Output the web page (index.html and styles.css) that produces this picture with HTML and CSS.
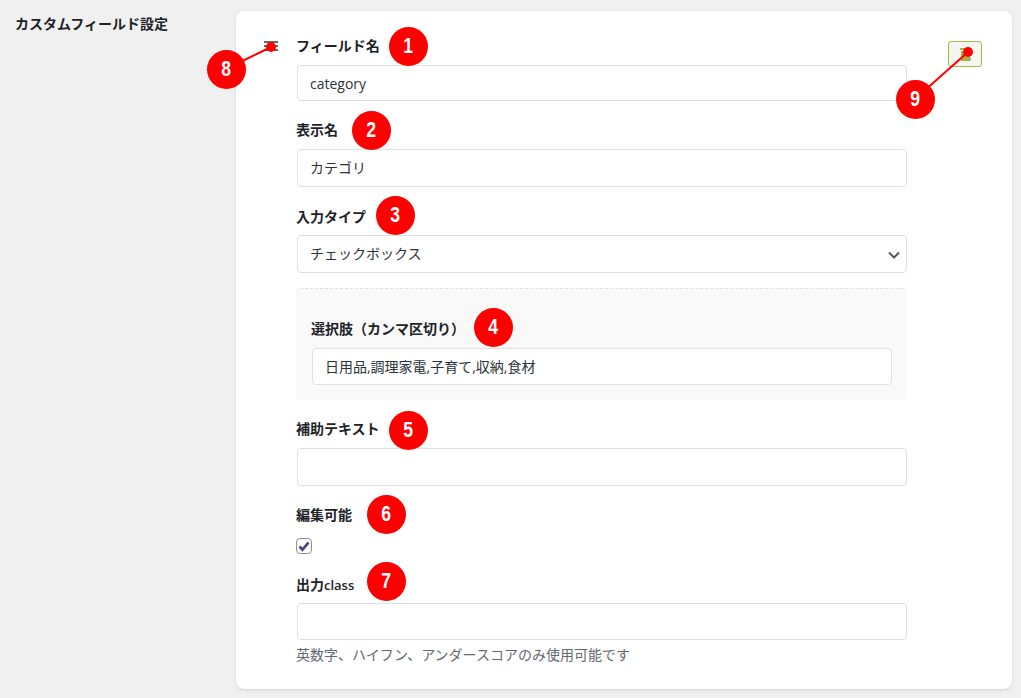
FILE: index.html
```html
<!DOCTYPE html>
<html lang="ja">
<head>
<meta charset="utf-8">
<title>カスタムフィールド設定</title>
<link rel="stylesheet" href="styles.css">
</head>
<body>
<main class="page">
  <h2 class="page-title">カスタムフィールド設定</h2>
  <section class="card">
    <div class="handle" aria-hidden="true"><span></span><span></span><span></span></div>
    <div class="fields">
      <div class="field field-name">
        <label class="label">フィールド名</label>
        <input class="input input-short" type="text" value="category">
      </div>
      <div class="field field-display">
        <label class="label">表示名</label>
        <input class="input" type="text" value="カテゴリ">
      </div>
      <div class="field field-type">
        <label class="label">入力タイプ</label>
        <div class="select-wrap">
          <select class="input select"><option>チェックボックス</option></select>
          <svg class="chevron" width="12" height="8" viewBox="0 0 12 8"><path d="M1 1.5l5 5 5-5" fill="none" stroke="#50575e" stroke-width="2"/></svg>
        </div>
      </div>
      <div class="options-panel">
        <label class="label">選択肢（カンマ区切り）</label>
        <input class="input input-short" type="text" value="日用品,調理家電,子育て,収納,食材">
      </div>
      <div class="field field-help">
        <label class="label">補助テキスト</label>
        <input class="input" type="text">
      </div>
      <div class="field field-edit">
        <label class="label">編集可能</label>
        <span class="checkbox"><svg width="12" height="11" viewBox="0 0 12 11"><path d="M1.5 5.5l3 3.2L10.5 1.5" fill="none" stroke="#4f3f73" stroke-width="2.6"/></svg></span>
      </div>
      <div class="field field-class">
        <label class="label">出力<span class="latin">class</span></label>
        <input class="input input-short" type="text">
        <p class="help">英数字、ハイフン、アンダースコアのみ使用可能です</p>
      </div>
    </div>
    <button class="trash" type="button" aria-label="削除">
      <svg width="11" height="13" viewBox="0 0 11 13"><path d="M0 0h8v2H0z" fill="#a9b13c"/><path d="M1 3h9v10H1z" fill="#a9b13c"/><path d="M10 9h1v4h-1z" fill="#8cc8e8"/></svg>
    </button>
  </section>
</main>

<svg class="leaders" width="1021" height="698" viewBox="0 0 1021 698" aria-hidden="true">
  <line x1="226" y1="69" x2="271" y2="47" stroke="#f00" stroke-width="2"/>
  <line x1="915" y1="99" x2="968" y2="52" stroke="#f00" stroke-width="2"/>
  <circle cx="271" cy="47" r="5" fill="#f00"/>
  <circle cx="968" cy="52" r="5" fill="#f00"/>
</svg>
<span class="badge b1"><span class="digit">1</span></span>
<span class="badge b2"><span class="digit">2</span></span>
<span class="badge b3"><span class="digit">3</span></span>
<span class="badge b4"><span class="digit">4</span></span>
<span class="badge b5"><span class="digit">5</span></span>
<span class="badge b6"><span class="digit">6</span></span>
<span class="badge b7"><span class="digit">7</span></span>
<span class="badge b8"><span class="digit">8</span></span>
<span class="badge b9"><span class="digit">9</span></span>
</body>
</html>
```
FILE: styles.css
```css
* { box-sizing: border-box; }
html, body { margin: 0; height: 698px; overflow: hidden; }
body {
  background: #f0f0f1;
  color: #1d2327;
  font-family: "Open Sans", "Noto Sans CJK JP", sans-serif;
  font-size: 14px;
  position: relative;
}
.page { display: flex; align-items: flex-start; padding-top: 11px; }
.page-title {
  width: 236px;
  margin: 0;
  padding: 3px 0 0 15px;
  font-size: 14px;
  line-height: 20px;
  font-weight: 700;
}
.card {
  width: 776px;
  height: 678px;
  background: #fff;
  border-radius: 8px;
  box-shadow: 0 1px 3px rgba(0,0,0,.12);
  display: flex;
  align-items: flex-start;
  padding: 26px 30px 0 28px;
}
.handle {
  width: 14px;
  margin-top: 4px;
  margin-right: 19px;
  display: flex;
  flex-direction: column;
  gap: 2px;
}
.handle span { display: block; height: 2px; background: #646970; }
.fields { width: 610px; flex: none; }
.label {
  display: block;
  font-weight: 700;
  font-size: 14px;
  line-height: 20px;
  margin: -1px 0 9px -1px;
}
.latin { font-size: 13px; font-weight: 600; }
.input {
  display: block;
  width: 100%;
  height: 38px;
  padding: 0 12px 2px;
  margin: 0;
  background: #fff;
  border: 1px solid #e0e0e0;
  border-radius: 4px;
  color: #2c3338;
  font: 14px "Open Sans", "Noto Sans CJK JP", sans-serif;
  outline: none;
}
.input-short { height: 37px; }
.field-name .input { height: 36px; padding-bottom: 0; }
.field-display { margin-top: 20px; }
.field-type { margin-top: 20px; }
.field-type .label { margin: 0 0 8px -1px; }
.select-wrap { position: relative; }
.select { appearance: none; -webkit-appearance: none; }
.chevron { position: absolute; right: 7px; top: 16px; }
.options-panel {
  margin-top: 15px;
  margin-left: -1px;
  width: 610px;
  height: 112px;
  padding: 31px 14px 0 16px;
  background: #f9f9f9;
  border-top: 1px dashed #e0e0e0;
  border-radius: 4px;
}
.field-help { margin-top: 20px; }
.field-edit { margin-top: 20px; }
.field-edit .label { margin-bottom: 13px; }
.field-class { margin-top: 22px; }
.field-class .label { margin-bottom: 8px; }
.checkbox {
  display: flex;
  align-items: center;
  justify-content: center;
  width: 16px;
  height: 16px;
  margin-left: -1px;
  border: 1px solid #8c8f94;
  border-radius: 4px;
  background: #fff;
}
.help {
  margin: 5px 0 0 -1px;
  color: #646970;
  font-size: 14px;
  line-height: 20px;
}
.trash {
  flex: none;
  width: 34px;
  height: 26px;
  margin: 4px 0 0 41px;
  padding: 0;
  display: flex;
  align-items: center;
  justify-content: center;
  background: #f4f6ef;
  border: 1px solid #a8b84a;
  border-radius: 3px;
}
.leaders { position: absolute; left: 0; top: 0; pointer-events: none; }
.badge {
  position: absolute;
  width: 39px;
  height: 39px;
  margin: -19.5px 0 0 -19.5px;
  border-radius: 50%;
  background: #f00;
  color: #fff;
  font: 700 22px/37px "Liberation Sans", sans-serif;
  text-align: center;
}
.digit { display: inline-block; transform: scaleX(.8); }
.b1 { left: 408px; top: 46px; }
.b2 { left: 371px; top: 130px; }
.b3 { left: 395px; top: 215px; }
.b4 { left: 493px; top: 327px; }
.b5 { left: 408px; top: 430px; }
.b6 { left: 386px; top: 514px; }
.b7 { left: 386px; top: 581px; }
.b8 { left: 226px; top: 69px; }
.b9 { left: 915px; top: 99px; }
```
